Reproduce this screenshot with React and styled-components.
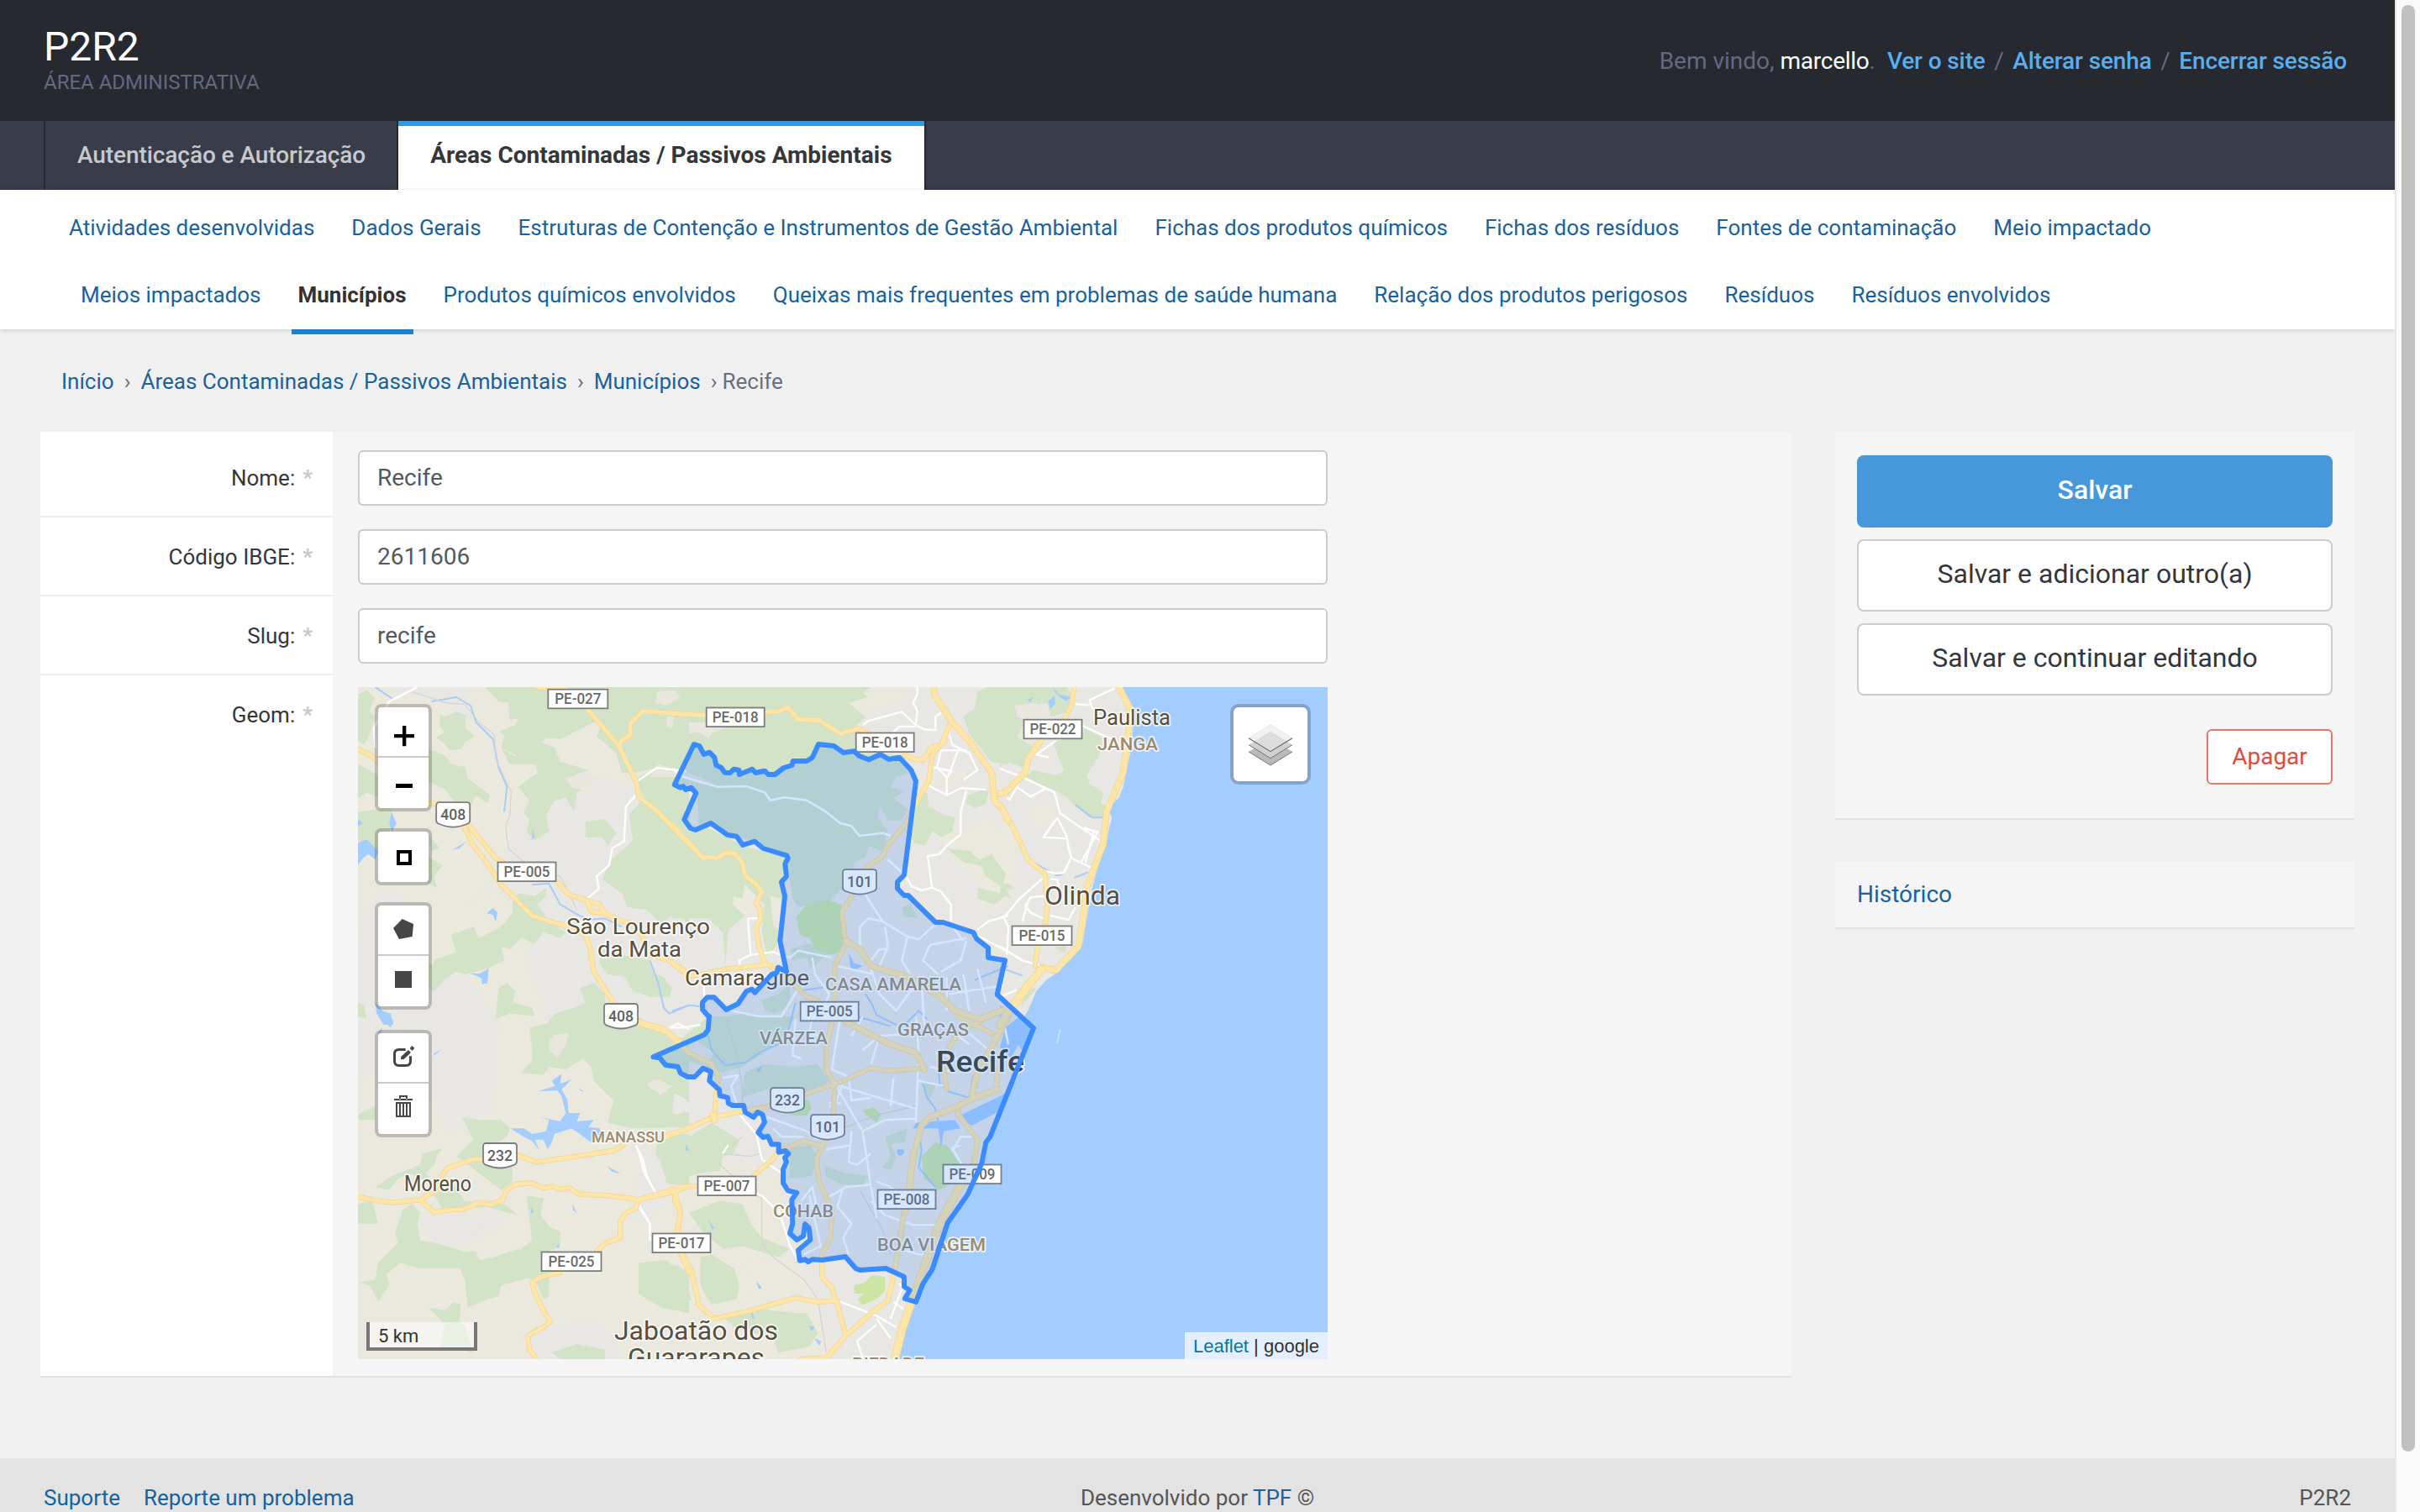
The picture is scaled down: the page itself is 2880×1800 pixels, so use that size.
import React from "react";
import styled, { createGlobalStyle, css } from "styled-components";

const GlobalStyle = createGlobalStyle`
  *, *::before, *::after { box-sizing: border-box; }
  html, body { margin: 0; padding: 0; }
  body {
    background: #f0f0f0;
    color: #333;
    font-family: Roboto, "Noto Sans", sans-serif;
    font-size: 26px;
    overflow: hidden;
  }
`;

/* ---------- frame ---------- */

const Frame = styled.div`
  display: flex;
  width: 2880px;
  height: 1800px;
  overflow: hidden;
`;

const Page = styled.div`
  display: flex;
  flex-direction: column;
  width: 2850px;
`;

const ScrollTrack = styled.div`
  flex: 1;
  padding: 6px 0 0 6px;
  background: #fafafa;
  border-left: 2px solid #e7e7e7;
`;

const ScrollThumb = styled.div`
  width: 16px;
  height: 1722px;
  border-radius: 8px;
  background: #c1c1c1;
`;

const Link = styled.a`
  color: #17629f;
  text-decoration: none;
`;

/* ---------- header ---------- */

const Header = styled.header`
  display: flex;
  align-items: center;
  justify-content: space-between;
  height: 144px;
  padding: 1px 57px 0 52px;
  background: #262930;
`;

const Brand = styled.div`
  display: flex;
  flex-direction: column;
`;

const BrandName = styled.h1`
  margin: 0;
  color: #fff;
  font-size: 48px;
  font-weight: 400;
  line-height: 50px;
`;

const BrandSub = styled.div`
  color: #636981;
  font-size: 24px;
  line-height: 34px;
`;

const UserTools = styled.div`
  display: flex;
  color: #636981;
  font-size: 28px;
  line-height: 40px;
  white-space: pre;
`;

const UserName = styled.span`
  color: #fff;
  letter-spacing: -0.25px;
`;

const ToolLink = styled.a`
  color: #58aeef;
  font-weight: 500;
  letter-spacing: -0.12px;
`;

const Slash = styled.span`
  padding: 0 10.5px;
`;

/* ---------- navigation ---------- */

const Tabs = styled.nav`
  display: flex;
  height: 82px;
  padding-left: 52px;
  background: linear-gradient(#383d49 0 72px, #363a48 82px);
`;

const Tab = styled.a`
  padding: 7px 37px 0 38px;
  border-left: 2px solid #262930;
  color: #c8c9cc;
  font-size: 28px;
  font-weight: 500;
  letter-spacing: -0.08px;
  line-height: 68px;
  ${(p) =>
    p.$active &&
    css`
      padding-right: 38px;
      border-right: 2px solid #262930;
      background: #fff;
      background-clip: padding-box;
      box-shadow: inset 0 6px 0 #319be9;
      color: #33373b;
      font-weight: 700;
      letter-spacing: 0;
    `}
`;

const SubNav = styled.nav`
  height: 166px;
  padding: 5px 74px 0;
  background: #fff;
  box-shadow: 0 1px 5px rgba(0, 0, 0, 0.16);
`;

const SubRow = styled.div`
  display: flex;
  gap: 28px;
  height: 80px;
  padding-left: ${(p) => p.$indent || 0}px;
`;

const SubLink = styled(Link)`
  position: relative;
  padding: 0 8px;
  line-height: 81px;
  ${(p) =>
    p.$active &&
    css`
      color: #333;
      font-weight: 700;
      &::after {
        content: "";
        position: absolute;
        left: 0;
        right: 0;
        top: 81px;
        height: 6px;
        background: #1b82d1;
      }
    `}
`;

/* ---------- body ---------- */

const Main = styled.main`
  display: flex;
  flex: 1;
  flex-direction: column;
`;

const Breadcrumb = styled.div`
  display: flex;
  height: 122px;
  padding: 42px 0 0 73px;
  color: #6b6f7d;
  line-height: 40px;
`;

const Chevron = styled.span`
  padding: 0 12px;
  &:last-of-type {
    padding-right: 6px;
  }
`;

const Columns = styled.div`
  display: grid;
  grid-template-columns: 2084px 618px;
  gap: 52px;
  align-items: start;
  padding-left: 48px;
`;

const Panel = styled.section`
  background: #f5f5f5;
  border-bottom: 2px solid #e2e2e2;
`;

const FormPanel = styled(Panel)`
  display: flex;
  flex-direction: column;
`;

const Row = styled.div`
  display: flex;
`;

const LabelCell = styled.label`
  display: flex;
  justify-content: flex-end;
  gap: 9px;
  width: 348px;
  padding: ${(p) => (p.$first ? 22 : 14)}px 24px 12px 0;
  background: #fff;
  border-bottom: ${(p) => (p.$last ? "none" : "2px solid #eee")};
  color: #33373b;
  line-height: 66px;
`;

const Star = styled.span`
  color: #c8c8c8;
  font-weight: 700;
`;

const FieldCell = styled.div`
  padding: ${(p) => (p.$first ? 22 : 14)}px 0 ${(p) => (p.$last ? 20 : 0)}px 30px;
`;

const Field = styled.input`
  display: block;
  width: 1154px;
  height: 66px;
  padding: 0 20px 2px 21px;
  border: 2px solid #ccc;
  border-radius: 6px;
  background: #fff;
  color: #55595c;
  font: 28px Roboto, sans-serif;
  outline: none;
`;

const Sidebar = styled.aside`
  display: flex;
  flex-direction: column;
  gap: 50px;
`;

const Actions = styled(Panel)`
  display: flex;
  flex-direction: column;
  gap: 14px;
  height: 462px;
  padding: 28px 26px;
`;

const Button = styled.button`
  height: 86px;
  padding: 0 0 5px;
  border: 2px solid ${(p) => (p.$primary ? "#4798db" : "#ccc")};
  border-radius: 8px;
  background: ${(p) => (p.$primary ? "#4798db" : "#fff")};
  color: ${(p) => (p.$primary ? "#fff" : "#33373b")};
  font: ${(p) => (p.$primary ? 500 : 400)} 32px Roboto, sans-serif;
`;

const DangerButton = styled(Button)`
  align-self: flex-end;
  width: 150px;
  height: 66px;
  margin-top: 26px;
  padding-bottom: 2px;
  border-color: #e8766c;
  border-radius: 6px;
  color: #df4b3f;
  font-size: 28px;
`;

const HistoryPanel = styled(Panel)`
  height: 80px;
  padding: 0 26px;
  font-size: 28px;
  line-height: 78px;
`;

const Footer = styled.footer`
  display: grid;
  grid-template-columns: 1fr auto 1fr;
  height: 64px;
  padding: 27px 52px 0 52px;
  background: #e3e3e3;
  color: #555;
  line-height: 40px;
`;

const FooterLinks = styled.div`
  display: flex;
  gap: 28px;
`;

const FooterRight = styled.div`
  text-align: right;
`;

/* ---------- map ---------- */

const MapBox = styled.div`
  position: relative;
  width: 1154px;
  height: 800px;
  overflow: hidden;
`;

const MapCanvas = styled.svg`
  display: block;
  font-family: Roboto, sans-serif;
`;

const ControlStack = styled.div`
  position: absolute;
  left: 20px;
  top: 20px;
  display: flex;
  flex-direction: column;
  gap: 20px;
`;

const ControlGroup = styled.div`
  width: 68px;
  border: 4px solid rgba(0, 0, 0, 0.2);
  border-radius: 8px;
  background: #fff;
  background-clip: padding-box;
  &:last-child {
    margin-top: 4px;
  }
`;

const ControlButton = styled.div`
  height: 60px;
  border-bottom: 2px solid #ccc;
  &:last-child {
    border-bottom: none;
  }
  svg {
    display: block;
  }
`;

const LayersControl = styled.div`
  position: absolute;
  right: 20px;
  top: 20px;
  width: 96px;
  height: 96px;
  border: 4px solid rgba(0, 0, 0, 0.2);
  border-radius: 10px;
  background: #fff;
  background-clip: padding-box;
`;

const ScaleBar = styled.div`
  position: absolute;
  left: 10px;
  bottom: 10px;
  width: 132px;
  height: 34px;
  padding-left: 10px;
  border: 4px solid #777;
  border-top: none;
  background: rgba(255, 255, 255, 0.5);
  color: #333;
  font-size: 22px;
  line-height: 33px;
`;

const Attribution = styled.div`
  position: absolute;
  right: 0;
  bottom: 0;
  height: 32px;
  padding: 0 10px;
  background: rgba(255, 255, 255, 0.7);
  color: #333;
  font: 22px/33px "Liberation Sans", Arial, sans-serif;
  a {
    color: #0078a8;
  }
`;

/* The map is described in six sectors; each has its own origin and a 3:1 grid. */
const SECTORS = {
  nw: [420, 810],
  n: [800, 810],
  ne: [1190, 810],
  sw: [420, 1210],
  s: [760, 1210],
  se: [1190, 1210],
};

const SEA = {
  ne: "M430 24L465 90L475 170L465 260L448 340L440 380L425 420L400 440L390 470L400 490L390 530L375 600L345 680L330 740L310 850L295 940L270 975L210 1040L165 1070L130 1110L105 1170L70 1230L50 1280L85 1330L70 1400L0 1545L-50 1650L-65 1725L-115 1835L-187 1938L-242 2105L-275 2155L-300 2220L-325 2280L-340 2340L-362 2424H1180V0H430Z",
};

const URBAN = {
  nw: "M90 24H400L430 140L350 90L240 60ZM560 480L720 440L860 340L990 370L1200 640V1230H700L620 1000L640 930L560 800L520 740L400 800L540 700L555 590ZM100 740L240 800L200 1000L400 1060L540 1230H18V900Z",
  n: "M560 700L700 330L640 160L700 100L830 60V24H1200V1230H0V850L400 850ZM0 290L60 300L70 380L40 520L0 500Z",
  ne: "M0 24H430L475 170L370 580L290 950L200 1040L60 1230H0Z",
  sw: "M18 0H520L500 340L340 420L280 300L18 200ZM240 700L300 715L540 690L540 730L480 780L330 850L260 780ZM600 1130L700 1110L850 1090L950 1150L930 1224H650ZM1030 480L1090 500L1130 630L1090 690L1020 730L960 720L1010 650ZM390 600L440 590L450 650L380 640Z",
  s: "M0 200L60 140L250 0H1400L1380 200L1240 430L1100 730L990 1000L920 1224H690L640 1030L540 850L460 640L300 500L250 400L100 380Z",
};

const DUNES = {
  n: "M700 24H790V80L700 115L680 60ZM930 540L1040 540L1120 480L1200 560V800L1090 810L1100 720L1000 640ZM880 340L1040 320L1060 350L900 390Z",
  ne: "M0 400L60 580L50 780L0 830ZM110 440L190 450L200 510L120 530Z",
  s: "M370 520L500 560L520 780L460 860L400 740ZM380 860L540 890L640 990L560 1010L400 1040Z",
};

const GREEN = {
  nw: "M18 50L50 35L75 60L60 110L80 130L60 190L40 230L18 215ZM310 120L330 130L370 110L405 125L400 170L435 200L400 220L385 245L345 250L320 220L297 205L325 185L310 160ZM470 24H1200V580L1110 480L1040 420L1010 350L1080 315L1000 330L960 330L940 260L870 200L890 150L860 150L800 180L740 210L690 205L650 250L590 270L530 240L540 200L525 180L580 160L590 135L560 140L555 80L520 75ZM530 240L575 270L660 215L720 240L740 290L840 320L870 360L800 400L790 470L760 420L720 430L690 480L700 540L650 570L620 540L630 500L610 470L630 430L590 380L660 330L650 300L560 300ZM300 255L330 270L350 300L400 310L410 350L490 410L480 440L440 410L420 450L380 440L350 420L330 390L270 360V250ZM18 300L60 320L90 340V420L50 400L18 420ZM18 470L90 460L130 450L150 500L120 560L90 620L18 570ZM270 550L310 600L280 610ZM230 690L270 630L320 660L290 700L300 740L260 720ZM830 505L900 495L940 545L910 590L890 560H830ZM1030 430L1100 470L1200 600V870L1150 830L1100 870L1050 820L980 810L960 760L890 710L920 640L970 600L1000 570L985 480ZM570 790L590 760L650 770L690 740V770L660 800L700 860L760 900L740 920L680 900L650 940L600 920L560 960L530 950L540 1000L480 1030L400 1050L370 1040L340 1060L270 1100L290 1000L370 970L350 910L430 880L450 920L530 880L570 830ZM520 1100L550 1080L580 1110L570 1150L640 1170L650 1200L560 1190L510 1210ZM690 1230L720 1190L790 1170L830 1150L810 1100L860 1080L900 1120V1230ZM890 960L960 980L1060 1000L1070 1040L1110 1060L1140 1100L1130 1130L1060 1130L1000 1110L970 1060L910 1050L880 1010ZM270 1010L330 1030L320 1080L290 1110L270 1100ZM18 1150L40 1160L50 1210L18 1200Z",
  n: "M0 24H710L680 45L700 60L630 80L690 130L650 170L660 250L830 270L850 330L800 345L780 380L830 395L790 420L840 460L820 500L770 500L740 450L735 490L770 540L750 610L700 590L690 630L650 650L630 720L590 760L560 790L450 810L430 780L410 640L330 590L240 560L140 510L95 515L90 420L60 360L20 310L0 300ZM0 530L60 540L110 520L200 560L250 590L400 630L395 780L350 770L360 870L385 900L370 950L340 985L320 900L330 800L260 730L250 780L220 770L215 800L260 840L200 890L190 1010L180 900L130 850H0ZM1120 24H1200V300L1140 290L1060 190L1040 130L1080 100L1090 40ZM870 420L910 400L915 450L970 480L1010 490L1000 540L960 560L930 540L900 590L860 580L850 500ZM1055 410L1110 390L1130 400L1120 440L1080 455L1050 440ZM980 600L1060 610L1100 640L1140 620L1190 690L1180 740L1120 700L1100 660L1040 650ZM1090 740L1170 760L1190 770L1150 800L1090 780ZM820 810L850 800L880 850L830 845ZM320 1140L380 1120L420 1080V1160L370 1190L330 1180ZM420 960L490 940L550 980L520 1010L490 1030L480 990L430 1000ZM140 1210L250 1190L340 1230H130Z",
  ne: "M0 24H240L260 60L250 110L180 130L170 80L60 100L60 130L90 140L70 210L130 240L80 310L20 290L0 310ZM190 220L280 200L300 170L360 200L370 240L310 340L320 370L370 400L360 440L390 450L360 490H320L270 450L230 410L170 380L80 350L120 320L200 340L230 320L210 280ZM0 730L30 725L50 740L25 750L40 780L0 760ZM200 950H240L230 970L200 960ZM100 1100L130 1100L70 1170Z",
  sw: "M630 40L800 0L1000 20L1080 30L1180 110L1200 150V310L1180 290L1120 260L1090 230L1050 220L1045 250L1090 270L1110 320L1150 350L1200 340V395L1000 400L910 380L930 300L860 230L850 180L820 150L760 190L700 180L680 210L600 200L640 160V120ZM1090 430L1200 420V600H1120L1110 540L1080 490ZM390 360L450 370L530 370L560 400L550 430L500 460L570 520V590L530 620L450 560L400 520L370 500L430 440ZM18 350L80 320V370L18 370ZM250 490L320 470L300 500L290 530L260 560L290 600L200 560L160 580L130 620L80 610L140 570L240 530ZM180 690L210 670L240 700L230 740L240 800L300 810L400 840H440L450 870L500 860L590 830L640 900V930L530 960L520 1000L480 1010L410 1040L400 940L380 900H240L170 880L120 920L130 960L90 1020L60 960L18 950L80 940L90 880L160 810L150 770ZM18 670L70 660L90 740H18ZM620 640L680 650L670 710L700 750L740 770V820L700 840V1000L680 1010L660 960L600 900L590 840L640 800ZM270 1040L330 1050L360 1020L385 1030L380 1090L400 1110L430 1200L310 1180L330 1100ZM1020 910L1090 880L1160 890L1200 920V1060L1100 1040L1020 990ZM710 1200L800 1170L900 1190V1224H740ZM290 640L360 600L400 660L540 670L590 710L480 680L320 690Z",
  s: "M250 0H550L510 90L370 180L300 200L90 130ZM380 200L450 170L560 180L640 170L680 230L620 270L460 260L370 290ZM0 0L130 90L50 140L100 200L30 240L60 290L130 250L120 340L70 370L0 380ZM80 440L180 430L260 380L310 410L360 440L340 490L300 500L290 550L220 560L100 590L80 530ZM540 470L610 460L640 500L620 570L540 580ZM660 530L740 560L820 570L800 600H720L670 570ZM880 430L960 400L950 450L900 455L920 500L900 550L870 540L900 500ZM1020 240L1050 230L1060 260L1030 300ZM180 700L290 660L370 670L400 740L440 790L540 830L500 860L370 820L300 830L220 760ZM0 880L100 870L150 920L190 1010L140 1040L0 990ZM220 860L260 850L340 900L360 960L350 1010L260 1030L220 960ZM300 1070L400 1040L560 1060L600 1060L640 1130L610 1180L500 1200L480 1150L340 1110Z",
};

const CLEARINGS = {
  nw: "M1085 40L1150 35L1170 60L1120 90L1080 80ZM1120 130L1145 130L1140 175L1120 160ZM1090 300L1160 320L1200 345L1120 345L1060 345ZM760 350L840 320L870 360L840 400L780 380Z",
  n: "M60 150L130 150L190 170L140 190L130 210L100 185L60 190ZM30 320L110 350L160 375L100 370L50 350Z",
  ne: "M50 90L130 80L160 110L130 150L70 130ZM90 150L150 165L130 200L100 220L60 200Z",
  sw: "M700 90L720 65L770 60L760 100L730 150L700 120ZM410 800L440 730L480 760Z",
  s: "M30 240L70 225L120 250L90 270L50 260ZM160 120L210 90L270 130L240 180Z",
};

const PARK = {
  n: "M443 845L480 800L560 785L605 800L600 840L610 920L605 970L560 980L510 960L490 920L455 910Z",
  s: "M1010 500L1060 450L1100 460L1145 525L1110 600L1070 620L1020 580ZM800 335L840 325L865 350L850 380L810 350ZM560 290L610 300L617 330L600 355H540ZM770 960L810 950L830 925L880 930V980L850 1010L800 1030L780 1010L805 990L770 990Z",
};

const LAKES = {
  nw: "M18 580L50 568L90 610L80 640L55 620L35 635L18 660ZM18 495L35 510L18 520ZM138 470L155 510L140 540L130 510ZM478 832L500 812L516 828L510 862L500 838ZM415 1045L450 1048L485 1030L480 1080L460 1085V1065L440 1055ZM80 1150L105 1180L135 1190L145 1230H110L85 1190ZM642 535L650 560L638 570ZM355 605L405 575L380 600Z",
  n: "M630 975L650 1010L680 1020L650 1035L635 1020Z",
  ne: "M172 75L195 55L198 85L180 100ZM190 24L210 50L255 60L235 75L210 55L195 40ZM98 70L118 60L108 78ZM190 690L230 695L200 700ZM0 1160L30 1190L10 1230H0Z",
  sw: "M565 400L610 400L640 420L690 410L700 370L670 360L740 375L760 345L745 285L730 265L660 268L722 248L710 230L745 205L740 240L780 226L745 260L765 295L770 345L810 345L800 375L860 370L840 395L880 400L900 430L850 450L810 420L780 400L720 420L710 450L695 475L680 440L650 440L665 478L640 445L610 430L570 405ZM110 0L145 15L135 40L120 25ZM88 60L105 38L100 60ZM288 132L315 118L290 140ZM908 535L955 562L925 555ZM783 668L798 700L786 692ZM725 822L738 812L735 830ZM805 255L828 270L812 265ZM638 680L645 700L635 705Z",
  s: "M1155 350L1310 275L1285 340L1190 390L1165 375ZM1290 110L1310 40L1360 0H1400L1380 110L1360 90L1330 150ZM925 475a13 13 0 1 0 20 0ZM170 455L180 480L168 478ZM250 730L270 755L262 762ZM420 945L440 970L430 975ZM608 1105L628 1108L618 1125ZM628 1150L652 1160L645 1175ZM420 190L442 175L430 200ZM990 380L1130 370L1150 400L1090 410L1080 470L1070 400L980 400Z",
};

const RIVERS = {
  nw: "M80 24L140 65M280 75L370 60L420 90L440 150L500 210L520 310L550 380L540 470M640 730L700 725L740 800L800 835L840 855L900 850L960 880M1060 1000L1090 1080L1110 1170L1130 1190L1200 1160",
  n: "M0 1180L60 1160L110 1165M690 1120L715 1160L730 1195L800 1230M830 1230L880 1180L910 1210M440 1110L550 1095M420 1230L440 1150M1200 1020L1080 1070",
  ne: "M130 655L190 690M265 705L315 685M270 445L330 490L370 490M0 1025L80 1055",
  s: "M245 50L260 120L310 175L380 165L440 125L520 90L550 0M1015 240L1030 290L1060 330L1075 410M1070 180L1075 240L1110 270L1180 290L1195 210M1000 400L1010 480L1000 540L1060 610M780 0L850 20L900 35M410 1080L400 1040",
};

const ROADS_MINOR = {
  nw: "M230 24L180 50L130 75L75 170L80 240M1015 360L1085 312L1190 325M1010 410L975 450L968 575L925 600L915 660L870 700L878 745L835 780",
  n: "M0 315L40 345L160 380L265 378L330 400L350 428L400 418L480 428L550 470L600 510L640 520L668 555L750 545L780 555M680 160L700 145L820 112L870 160L875 110L860 80L875 50V24M870 165L810 165L780 195M870 160L900 175L940 178V130L960 115M960 250L945 310L980 345V410L905 370M980 410L1030 385L1120 390M1050 395L1030 470L1030 550L980 590L955 620L912 628L928 740L890 750L855 735L835 700L770 640M928 740L960 755L995 800V860M985 180L1000 230L1060 260L1090 320L1040 355M955 250L1050 250M1020 250L985 345M930 310L1000 325M690 765L750 860L840 915L880 925L940 870M750 860L700 850L670 880V950L710 1000L740 960L770 960M760 880L770 950L740 1020M840 915L820 1000L850 1050M1050 920L920 945L895 1000L950 1050M1050 930L1030 1000L960 1040M1000 880L1040 930M1070 900L1200 970M1090 890L1130 860L1200 840M270 850H320M270 850L280 980L240 1000V1030M110 1050L115 1130M280 980L360 970L420 990L450 965L520 980L570 990M710 1030L740 1120L800 1180L850 1110L900 1090M890 1080L900 1230M980 1060V1180M1040 1050L1060 1180M1090 1030L1120 1150M990 1120L1180 1090M500 990L510 1050L560 1120L530 1200M190 1175L310 1200L390 1200L450 1100M590 1020L720 1050",
  ne: "M410 28L320 70L330 100L380 110M270 85L320 88M290 160L400 210M200 215L130 265L175 275M0 315L80 345L195 400L215 475L355 570M80 345L35 425L25 420M60 380L110 415L165 385M205 490L155 560L240 565L245 600L255 630L230 685L200 690L160 680M205 490L240 560M255 635L330 670M300 530L350 540L290 650M335 540L305 650M300 525L350 545M155 705L70 780L20 840L0 850M160 770L110 775L90 805L110 830L155 850M100 790L80 860M180 840L245 855L270 810M180 710L205 710L210 740M10 840L30 880L25 980M0 950L80 1000L150 1020M0 1130L60 1105",
  sw: "M1010 460L1035 510L1050 570L1080 630M1020 680L1060 740V800M1130 40L1160 25L1200 45",
  s: "M110 40L160 40L220 30M360 350L420 420L440 510L510 560M0 480L20 560L55 620M0 670L40 740V800M400 625L440 640L490 690M500 690L540 820L570 870M300 220L355 210L330 250L350 310M700 240L800 410L830 610L850 720M720 0L690 190L740 210L700 320L680 320M680 310L720 310M800 410L880 370L990 365M690 240L990 330M800 120L860 70L990 60M860 70L830 170M990 0L1000 130L990 380M760 410L750 520L780 530L830 490M670 475L760 460M670 650L740 610L830 600M620 1010M710 1015L850 1070L920 1110M850 1080L900 1150M940 970L900 1080M930 955L950 975M850 1100L780 1160L800 1220M910 1020L945 1045M930 830L1000 850L1040 850M850 590L890 605L960 650M830 660L880 710L980 745H1080M730 610L710 680L760 740L730 790L750 850M560 10L550 140L580 150M620 0L610 60L680 80M800 0L760 70M750 210L760 300L830 290M910 220L900 320M1120 480L1150 430L1190 430M1150 460L1120 470L1160 540M1000 230L1100 250M1040 180L1130 200M1060 130L1200 170M1100 40L1180 100M1180 60L1250 120M580 660L620 610L640 700M610 640L650 820L590 850M480 400L510 430L590 430M460 360L600 410L640 440M300 490L320 460M1300 0L1320 100",
};

/* reef line off the harbour */
const REEF = {
  se: "M215 45L210 70L205 95",
};

const ROADS = {
  nw: "M18 245L60 265L90 290M270 440H310M415 520L440 550L510 635L560 665M395 520L430 590L470 640L530 730L590 790L640 840L700 860L770 880L830 910L845 950L860 1040L930 1150M730 720L770 765L835 785L850 825L900 832L960 860L1010 870L1040 930L1060 980L1130 1000L1190 1040M835 785L880 800L900 832M840 105L950 235L1015 370L1020 415L1090 470L1200 585M950 235L960 215L990 195V155L1035 110L1200 122M660 24L700 28L760 26M1020 1220L1100 1240",
  n: "M0 118L120 125M330 115L380 110L415 98L450 140L525 143L600 190L665 172L700 190M0 515L110 635L130 630L160 635L190 615L225 620L250 650L260 695L300 730L320 755L300 795L315 820V850L300 880L310 950L330 1010L400 1050L480 1130L520 1145M0 1010L60 1055L100 1050L200 1030L350 1015M995 150L960 230L925 240L895 285L860 280L830 265M975 215L930 260L915 360L870 440L835 510L770 590L750 630L690 670M645 765L605 830L620 940L580 1020V1150L570 1230M1150 405H1180L1200 395",
  ne: "M265 24L255 90L230 140M135 950L125 1020M0 440L50 530L100 640L160 690L170 800L160 880",
  sw: "M18 645L100 660L140 665L240 655L300 620L310 580L340 540L430 510H465M240 655L290 700L350 690H390L450 665L490 672L535 655L550 620L580 600L635 595L680 612L715 608L740 618L770 612L810 635L920 640L1020 655L1150 625L1200 605M1020 655L1010 685L970 705L955 730V790L900 810L870 840M740 915L670 930L640 950L650 990L680 1050L705 1090L680 1110L625 1140L630 1190L655 1224M585 495L655 520L800 500L860 490L930 480L965 460M1120 425L1200 400M1150 625V660L1170 700L1155 775M1170 845L1200 915M1020 25L1120 55L1160 95L1200 130",
  s: "M0 20L90 45L140 85L180 130L260 170L285 215L270 350M100 430L200 390L265 360L370 340L470 320M600 275L720 235L830 185L890 195L1020 185M0 655L150 610L210 605M415 565L480 510L500 480L590 445L660 465M130 630L150 700L140 770M155 845L190 910L215 1030L270 1080L400 1050L560 1005L640 1020L710 1015M690 20L670 110V190L700 240L695 350M660 450L635 510L645 590L690 690L685 790L655 850V930L690 970L710 1030L740 1140M580 1224L670 1220L740 1140L830 1060L890 1015L910 930L950 690M1140 320V350L1210 440L1195 540M1280 260V190L1250 170M1140 0L1260 60M1110 110L1140 60L1250 0M1100 260L1090 190",
};

const HIGHWAYS = {
  n: "M935 24V50L1000 150L1060 215L1140 330L1150 430L1180 460L1200 500M620 930L670 960L710 1020L840 1060L960 1130L1010 1180L1100 1210L1200 1170",
  ne: "M150 210L100 280L90 330L20 400L0 405M425 24L465 100L460 180L440 330L380 470L370 580L310 740L300 830L280 950L200 1035L150 1025",
  s: "M265 350L270 370M965 620L980 500L1010 390L1040 360L1140 320L1200 290L1280 260M740 20L900 100L990 130L1020 190M1190 280L1210 200L1320 0M950 700L970 600",
};

const SHORE_ROAD = {
  ne: "M150 1030L100 1090L40 1170L0 1230",
  s: "M1180 560L1150 600L1070 750L1035 850L985 990L940 1120L915 1224",
};

const RAIL = {
  nw: "M210 40L330 80L400 85L450 150L505 195L510 280L565 400L560 480L545 520L555 600L610 650L740 700L800 820",
  s: "M310 0L350 130L370 250L370 330M370 430L300 490L400 500L430 490M380 620L440 650L440 810L480 860L590 940L640 1010L670 1200M990 320L860 350L700 410M790 620L870 760L900 850M290 530L370 600",
};

const BOUNDARY = [
  ["n", "78 228 97 234 113 264 133 257 151 275 157 303 175 311 187 329 207 330 220 317 238 320 240 336 285 317 298 330 330 323 343 336 367 336 398 312 428 303 431 288 480 288 500 276 522 228 577 234 611 258 650 253 668 270 702 283 743 264 773 282 811 275 853 320 870 360 828 695 804 720 804 743 828 768 842 768 940 864 967 864 1075 900 1087 923 1128 955 1128 990 1188 1000 1160 1122"],
  ["se", "120 42"],
  ["s", "1255 430 1240 450 1225 525 1175 635 1103 738 1048 905 1015 955 990 1020 950 1008 968 978 948 965 948 930 883 900 790 906 775 900 738 858 655 870 620 868 605 877 595 868 575 872 570 835 613 798 608 755 594 742 588 785 565 798 540 775 550 740 547 655 565 630 533 622 516 595 516 545 528 520 522 505 535 490 525 480 500 485 500 457 475 457 462 428 445 432 427 415 450 378 442 350 425 342 410 360 380 342 375 318 335 318 320 310 318 290 290 283 288 262 253 230 258 197 230 185 200 216 175 216 150 203 140 180 97 174 75 148 52 145 235 65 248 48 252 0"],
  ["n", "132 1203 108 1175 108 1150 125 1132 150 1132 193 1176 235 1155 265 1110 285 1103 295 1115 355 1050 373 1045 378 1025 408 1040 385 930 402 770 390 720 408 700 403 655 413 635 408 625 325 600 294 575 252 588 230 557 198 552 138 510 83 534 65 528 43 497 85 402 68 383 48 390 38 378 30 383 8 373"],
];

const boundaryPoints = BOUNDARY.map(([sector, list]) => {
  const [ox, oy] = SECTORS[sector];
  return list
    .split(" ")
    .map((v, i) => ((i % 2 ? oy : ox) + Number(v) / 3).toFixed(1))
    .join(" ");
}).join(" ");

const PLACES = [
  { t: "São Lourenço", x: 674, y: 1112, w: 171, s: 26 },
  { t: "da Mata", x: 711, y: 1139, w: 100, s: 26 },
  { t: "Camaragibe", x: 815, y: 1173, w: 148, s: 26 },
  { t: "Olinda", x: 1243, y: 1077, w: 90, s: 32 },
  { t: "Paulista", x: 1301, y: 863, w: 92, s: 25 },
  { t: "Moreno", x: 481, y: 1418, w: 80, s: 25 },
  { t: "Jaboatão dos", x: 731, y: 1595, w: 195, s: 31 },
  { t: "Guararapes", x: 747, y: 1627, w: 163, s: 31 },
  { t: "Recife", x: 1114, y: 1276, w: 105, s: 35, b: true },
  { t: "JANGA", x: 1306, y: 893, w: 72, s: 21, d: true },
  { t: "CASA AMARELA", x: 982, y: 1179, w: 162, s: 21, d: true },
  { t: "GRAÇAS", x: 1068, y: 1233, w: 85, s: 21, d: true },
  { t: "VÁRZEA", x: 904, y: 1243, w: 81, s: 21, d: true },
  { t: "MANASSU", x: 704, y: 1360, w: 87, s: 18, d: true },
  { t: "COHAB", x: 920, y: 1449, w: 72, s: 21, d: true },
  { t: "BOA VIAGEM", x: 1044, y: 1489, w: 129, s: 21, d: true },
  { t: "PIEDADE", x: 1014, y: 1631, w: 86, s: 21, d: true },
];

const STATE_ROADS = [
  ["PE-027", 652.3, 820.7, 71],
  ["PE-018", 840.7, 842.5, 69],
  ["PE-018", 1018.7, 872.5, 69],
  ["PE-022", 1218.5, 856.7, 69],
  ["PE-015", 1204.5, 1102.5, 71],
  ["PE-005", 592.5, 1026.5, 69],
  ["PE-005", 952.7, 1192.7, 69],
  ["PE-009", 1122.5, 1386.5, 69],
  ["PE-008", 1044.5, 1416.5, 69],
  ["PE-007", 830.5, 1400.5, 69],
  ["PE-017", 776.5, 1468.5, 69],
  ["PE-025", 644.5, 1490.5, 71],
];

const FEDERAL_ROADS = [
  ["408", 518.7, 954.7],
  ["408", 718.5, 1194.5],
  ["101", 1002.5, 1034.7],
  ["232", 916.5, 1294.7],
  ["101", 964.5, 1326.7],
  ["232", 574.5, 1360.5],
];

function Layer({ data, ...rest }) {
  return (
    <g strokeLinejoin="round" {...rest}>
      {Object.entries(data).map(([sector, d]) => (
        <path
          key={sector}
          d={d}
          transform={`translate(${SECTORS[sector].join(" ")}) scale(0.33333)`}
        />
      ))}
    </g>
  );
}

function Road({ data, width, casing }) {
  return (
    <>
      <Layer data={data} fill="none" stroke="#f1d79a" strokeWidth={width + casing} strokeLinecap="round" />
      <Layer data={data} fill="none" stroke="#fde5a8" strokeWidth={width} strokeLinecap="round" />
    </>
  );
}

function RecifeMap() {
  return (
    <MapCanvas width="1154" height="800" viewBox="426 818 1154 800">
      <rect x="426" y="818" width="1154" height="800" fill="#ebe8dd" />
      <Layer data={URBAN} fill="#e9e7e3" />
      <Layer data={DUNES} fill="#ebe8dd" />
      <Layer data={GREEN} fill="#d2e3c8" />
      <Layer data={CLEARINGS} fill="#e9e6de" />
      <Layer data={PARK} fill="#cbe6a3" />
      <Layer data={SEA} fill="#a3ccff" />
      <Layer data={LAKES} fill="#a3ccff" />
      <Layer data={RIVERS} fill="none" stroke="#a9cdf8" strokeWidth="6" />
      <Layer data={RAIL} fill="none" stroke="#d4d3d1" strokeWidth="3.5" />
      <Layer data={ROADS_MINOR} fill="none" stroke="#fdfdfd" strokeWidth="7.5" />
      <Layer data={REEF} fill="none" stroke="#c9dff8" strokeWidth="6" />
      <Road data={ROADS} width={14} casing={5} />
      <Road data={HIGHWAYS} width={19} casing={5} />
      <Road data={SHORE_ROAD} width={25} casing={5} />

      {STATE_ROADS.map(([label, x, y, w]) => (
        <g key={`${label}-${x}`}>
          <rect x={x} y={y} width={w} height="22.6" fill="#fff" stroke="#7d7d7d" strokeWidth="1.8" />
          <text x={x + w / 2 - 27.5} y={y + 17.5} fontSize="17.5" fontWeight="500" fill="#6a6a6a" textLength="55" lengthAdjust="spacingAndGlyphs">
            {label}
          </text>
        </g>
      ))}
      {FEDERAL_ROADS.map(([label, x, y]) => (
        <g key={`${label}-${x}`}>
          <path
            transform={`translate(${x} ${y})`}
            d="M4 .5H37Q40.500 .5 40.500 4V22Q40.500 25 37 26.300Q28 29.800 20.500 30Q13 29.800 4 26.300Q.5 25 .5 22V4Q.5 .5 4 .5Z"
            fill="#fff"
            stroke="#7d7d7d"
            strokeWidth="1.8"
          />
          <text x={x + 5.5} y={y + 21.5} fontSize="17.5" fontWeight="500" fill="#606060" textLength="30" lengthAdjust="spacingAndGlyphs">
            {label}
          </text>
        </g>
      ))}
      {PLACES.map((p) => (
        <text
          key={p.t}
          x={p.x}
          y={p.y}
          fontSize={p.s}
          fontWeight={p.b || p.d ? 500 : 400}
          fill={p.d ? "#9b8a6c" : p.b ? "#40392c" : "#574f40"}
          stroke="rgba(255,255,255,.75)"
          strokeWidth="3.5"
          strokeLinejoin="round"
          paintOrder="stroke"
          textLength={p.w}
          lengthAdjust="spacingAndGlyphs"
        >
          {p.t}
        </text>
      ))}

      <polygon
        points={boundaryPoints}
        fill="#3388ff"
        fillOpacity="0.2"
        stroke="#3a8bff"
        strokeWidth="6"
        strokeLinejoin="round"
      />
    </MapCanvas>
  );
}

function Glyph({ children }) {
  return (
    <svg width="60" height="60" viewBox="0 0 180 180" fill="#464646">
      {children}
    </svg>
  );
}

function MapControls() {
  return (
    <ControlStack>
      <ControlGroup>
        <ControlButton>
          <Glyph><path fill="#000" d="M57 96H87V66H100V96H129V109H100V139H87V109H57Z" /></Glyph>
        </ControlButton>
        <ControlButton>
          <Glyph><path fill="#000" d="M63 93H123V108H63Z" /></Glyph>
        </ControlButton>
      </ControlGroup>
      <ControlGroup>
        <ControlButton>
          <Glyph><rect x="72" y="72" width="42" height="42" fill="none" stroke="#000" strokeWidth="12" /></Glyph>
        </ControlButton>
      </ControlGroup>
      <ControlGroup>
        <ControlButton>
          <Glyph><path d="M86 48L126 66L122 111L75 120L54 81Z" /></Glyph>
        </ControlButton>
        <ControlButton>
          <Glyph><path d="M60 54H120V114H60Z" /></Glyph>
        </ControlButton>
      </ControlGroup>
      <ControlGroup>
        <ControlButton>
          <Glyph>
            <path d="M98 58.500H74Q58.500 58.500 58.500 74V100Q58.500 115.500 74 115.500H100Q115.500 115.500 115.500 100V82" fill="none" stroke="#464646" strokeWidth="9" />
            <path d="M82 83L108 60L117 69L92 93L81 94ZM113 54L121 45L130 53L122 63Z" />
          </Glyph>
        </ControlButton>
        <ControlButton>
          <Glyph>
            <path d="M57 54H123V60H57ZM75 42H105V56H99V48H81V56H75ZM63 66H117V120H63ZM69 72V114H75V72ZM81 72V114H87V72ZM93 72V114H99V72ZM105 72V114H111V72Z" fillRule="evenodd" />
          </Glyph>
        </ControlButton>
      </ControlGroup>
    </ControlStack>
  );
}

function LayersIcon() {
  return (
    <svg width="88" height="88" viewBox="0 0 264 264">
      <path d="M132 110L210 159L132 207L54 159Z" fill="#b9b9b9" />
      <path d="M54 159L132 207L210 159" fill="none" stroke="#757575" strokeWidth="3" />
      <path d="M132 85L210 134L132 182L54 134Z" fill="#d0d0d0" />
      <path d="M54 134L132 182L210 134" fill="none" stroke="#757575" strokeWidth="3" />
      <path d="M132 60L210 110L132 158L54 110Z" fill="#f1f1f1" stroke="#d5d5d5" strokeWidth="1" />
      <path d="M132 86L191 122L132 158L73 122Z" fill="#dcdcdc" />
      <path d="M54 110L132 158L210 110" fill="none" stroke="#6e6e6e" strokeWidth="3.500" />
    </svg>
  );
}

/* ---------- content ---------- */

const SUBNAV = [
  [
    "Atividades desenvolvidas",
    "Dados Gerais",
    "Estruturas de Contenção e Instrumentos de Gestão Ambiental",
    "Fichas dos produtos químicos",
    "Fichas dos resíduos",
    "Fontes de contaminação",
    "Meio impactado",
  ],
  [
    "Meios impactados",
    "Municípios",
    "Produtos químicos envolvidos",
    "Queixas mais frequentes em problemas de saúde humana",
    "Relação dos produtos perigosos",
    "Resíduos",
    "Resíduos envolvidos",
  ],
];

const FIELDS = [
  ["Nome:", "Recife"],
  ["Código IBGE:", "2611606"],
  ["Slug:", "recife"],
];

export default function App() {
  return (
    <Frame>
      <GlobalStyle />
      <Page>
        <Header>
          <Brand>
            <BrandName>P2R2</BrandName>
            <BrandSub>ÁREA ADMINISTRATIVA</BrandSub>
          </Brand>
          <UserTools>
            <span>Bem vindo, </span>
            <UserName>marcello</UserName>
            <span>.  </span>
            <ToolLink>Ver o site</ToolLink>
            <Slash>/</Slash>
            <ToolLink>Alterar senha</ToolLink>
            <Slash>/</Slash>
            <ToolLink>Encerrar sessão</ToolLink>
          </UserTools>
        </Header>
        <Tabs>
          <Tab>Autenticação e Autorização</Tab>
          <Tab $active>Áreas Contaminadas / Passivos Ambientais</Tab>
        </Tabs>
        <SubNav>
          {SUBNAV.map((row, i) => (
            <SubRow key={i} $indent={i * 14}>
              {row.map((name) => (
                <SubLink key={name} $active={name === "Municípios"}>{name}</SubLink>
              ))}
            </SubRow>
          ))}
        </SubNav>
        <Main>
          <Breadcrumb>
            <Link>Início</Link>
            <Chevron>›</Chevron>
            <Link>Áreas Contaminadas / Passivos Ambientais</Link>
            <Chevron>›</Chevron>
            <Link>Municípios</Link>
            <Chevron>›</Chevron>
            Recife
          </Breadcrumb>
          <Columns>
            <FormPanel>
              {FIELDS.map(([label, value], i) => (
                <Row key={label}>
                  <LabelCell $first={i === 0}>{label}<Star>*</Star></LabelCell>
                  <FieldCell $first={i === 0}>
                    <Field defaultValue={value} />
                  </FieldCell>
                </Row>
              ))}
              <Row>
                <LabelCell $last>Geom:<Star>*</Star></LabelCell>
                <FieldCell $last>
                  <MapBox>
                    <RecifeMap />
                    <MapControls />
                    <LayersControl><LayersIcon /></LayersControl>
                    <ScaleBar>5 km</ScaleBar>
                    <Attribution><a>Leaflet</a> | google</Attribution>
                  </MapBox>
                </FieldCell>
              </Row>
            </FormPanel>
            <Sidebar>
              <Actions>
                <Button $primary>Salvar</Button>
                <Button>Salvar e adicionar outro(a)</Button>
                <Button>Salvar e continuar editando</Button>
                <DangerButton>Apagar</DangerButton>
              </Actions>
              <HistoryPanel><Link>Histórico</Link></HistoryPanel>
            </Sidebar>
          </Columns>
        </Main>
        <Footer>
          <FooterLinks>
            <Link>Suporte</Link>
            <Link>Reporte um problema</Link>
          </FooterLinks>
          <div>Desenvolvido por <Link>TPF</Link> ©</div>
          <FooterRight>P2R2</FooterRight>
        </Footer>
      </Page>
      <ScrollTrack>
        <ScrollThumb />
      </ScrollTrack>
    </Frame>
  );
}
